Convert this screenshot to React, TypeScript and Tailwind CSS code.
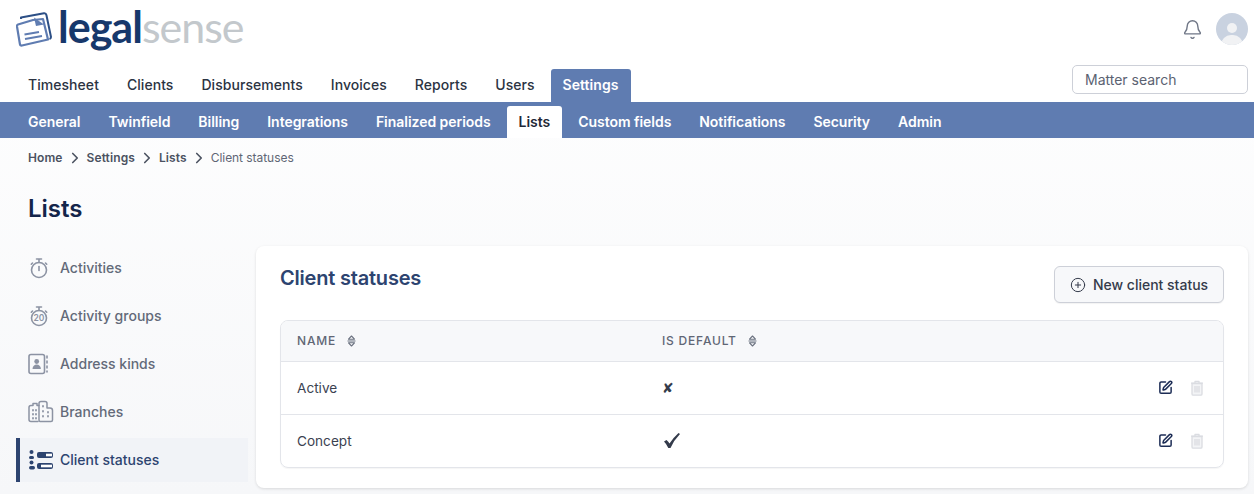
import { Bell, ChevronRight, CirclePlus, SquarePen } from "lucide-react";

const topTabs = ["Timesheet", "Clients", "Disbursements", "Invoices", "Reports", "Users", "Settings"];
const subTabs = ["General", "Twinfield", "Billing", "Integrations", "Finalized periods", "Lists", "Custom fields", "Notifications", "Security", "Admin"];

function Logo() {
  return (
    <div className="flex items-start">
      <svg width="37" height="37" viewBox="0 0 37 37" fill="none" className="mt-[8px]">
        <path d="M5 7 L5 5.5 L28 1.2 Q30 1 30.4 3 L35 25 Q35 26.5 33.5 27" stroke="#2c4f86" strokeWidth="2" strokeLinejoin="round" />
        <path d="M2 12.5 L17 8 L27 7 L32 27.5 L6 33.5 Q4.2 33.8 3.9 32 L1 14.5 Q0.8 13 2 12.5 Z" fill="#fff" stroke="#5f7cb1" strokeWidth="2.2" strokeLinejoin="round" />
        <path d="M18 5.5 L20 14 L28 12.5 Z" fill="#5f7cb1" />
        <path d="M8.5 22.5 L23 20 M9 27 L26 24" stroke="#5f7cb1" strokeWidth="2" />
      </svg>
      <div className="ml-[5px] -mt-[3px] font-['Lato',sans-serif] text-[43px] leading-[52px] font-bold tracking-[-1px]">
        <span className="text-[#17386b]">legal</span>
        <span className="font-normal text-[#c3c8cc]">sense</span>
      </div>
    </div>
  );
}

function Stopwatch({ label }: { label?: string }) {
  return (
    <svg width="24" height="24" viewBox="0 0 24 24" fill="none" stroke="#8c93a3" strokeWidth="1.6" strokeLinecap="round">
      <circle cx="11" cy="14" r="7.5" />
      <path d="M8.5 3h5M11 3v3.5M17.5 7l1.2 1.2M4.5 7 3.3 8.2" />
      {label ? (
        <text x="11" y="17.2" textAnchor="middle" fontSize="8.5" stroke="none" fill="#8c93a3" fontFamily="Inter, sans-serif" fontWeight="600">
          {label}
        </text>
      ) : (
        <path d="M11 10.5v4" />
      )}
    </svg>
  );
}

function AddressIcon() {
  return (
    <svg width="24" height="24" viewBox="0 0 24 24" fill="none" stroke="#8c93a3" strokeWidth="1.6" strokeLinecap="round">
      <rect x="1" y="2.5" width="15.5" height="19" rx="2" />
      <circle cx="8.7" cy="9.5" r="2.4" fill="#8c93a3" stroke="none" />
      <path d="M4.5 17c0-6 8.4-6 8.4 0z" fill="#8c93a3" stroke="none" />
      <path d="M19 4v2M19 9v2M19 14v2M19 19v1" />
    </svg>
  );
}

function BranchIcon() {
  return (
    <svg width="26" height="24" viewBox="0 0 26 24" fill="none" stroke="#8c93a3" strokeWidth="1.5" strokeLinecap="round" strokeLinejoin="round">
      <path d="M11 5.5H9V3.5H5v2H3a2 2 0 0 0-2 2v12a2 2 0 0 0 2 2h7" />
      <path d="M12 21.5a1.5 1.5 0 0 1-1-1.5V3.5A2 2 0 0 1 13 1.5h4a2 2 0 0 1 2 2V8h3a2.5 2.5 0 0 1 2.5 2.5V20a1.5 1.5 0 0 1-1.5 1.5z" />
      <path d="M5 10v.5M5 14v.5M5 18v.5M8 10v.5M8 14v.5M8 18v.5M15 6v.5M15 11v.5M15 16v.5M20 12v.5M20 16v.5" strokeWidth="1.8" />
    </svg>
  );
}

function StatusIcon() {
  return (
    <svg width="26" height="24" viewBox="0 0 26 24" fill="none">
      <circle cx="3.5" cy="4" r="2" fill="#2d4470" />
      <rect x="1" y="8" width="5" height="3" rx="1.5" fill="#2d4470" />
      <circle cx="3.5" cy="14.5" r="2" fill="#2d4470" />
      <rect x="1" y="18" width="6" height="3.5" rx="1.7" fill="#2d4470" />
      <rect x="9" y="4" width="16" height="6" rx="2" fill="#2d4470" />
      <rect x="18" y="5.7" width="6" height="2.6" fill="#fff" />
      <rect x="9" y="15" width="16" height="6" rx="2" fill="#2d4470" />
      <rect x="13" y="16.7" width="11" height="2.6" fill="#fff" />
    </svg>
  );
}

function SortIcon() {
  return (
    <svg width="9" height="12" viewBox="0 0 9 12" fill="none" stroke="#6b7280" strokeWidth="1.1" strokeLinejoin="round">
      <path d="M4.5 1 7.5 4.2h-6zM.5 6h8M4.5 11l-3-3.2h6z" />
    </svg>
  );
}

function TrashIcon() {
  return (
    <svg width="14" height="16" viewBox="0 0 14 16" fill="none" stroke="#dadce1" strokeWidth="1.3" strokeLinejoin="round">
      <path d="M2 3.5h10V14a1.2 1.2 0 0 1-1.2 1.2H3.2A1.2 1.2 0 0 1 2 14z" fill="#f3f4f6" />
      <path d="M1 3.2h12M5 3V1.3h4V3M5 6v6.5M7 6v6.5M9 6v6.5" />
    </svg>
  );
}

function CheckIcon() {
  return (
    <svg width="16" height="15" viewBox="0 0 16 15" className="ml-[2px]">
      <path d="M0 8.5 2.5 7Q4.5 8.5 5.5 10.5 9 5 14.5 0L16 1Q10 7 6.5 15H4.3Q2.5 11 0 8.5Z" fill="#343b4b" />
    </svg>
  );
}

function ActionIcons() {
  return (
    <div className="ml-auto flex items-center gap-[17px] pr-[19px]">
      <SquarePen size={15} strokeWidth={2.4} className="text-[#1c2c55]" />
      <TrashIcon />
    </div>
  );
}

const sideItems = [
  { label: "Activities", icon: <Stopwatch /> },
  { label: "Activity groups", icon: <Stopwatch label="20" /> },
  { label: "Address kinds", icon: <AddressIcon /> },
  { label: "Branches", icon: <BranchIcon /> },
];

export default function App() {
  return (
    <div className="h-[494px] w-[1254px] overflow-hidden bg-gradient-to-b from-white to-[#f6f7f9] font-['Inter',sans-serif]">
      {/* Header */}
      <div className="relative h-[102px] bg-white">
        <div className="pl-[16px] pt-[4px]">
          <Logo />
        </div>
        <div className="absolute right-[6px] top-[13px] flex items-center gap-[13px]">
          <Bell size={21} strokeWidth={1.6} className="text-[#6f7686]" />
          <div className="relative h-[32px] w-[32px] overflow-hidden rounded-full bg-[#c9d2e0]">
            <div className="absolute left-[11px] top-[10px] h-[10px] w-[10px] rounded-full bg-[#f1f2f4]" />
            <div className="absolute left-[5px] top-[22px] h-[20px] w-[22px] rounded-full bg-[#f1f2f4]" />
          </div>
        </div>
        <div className="absolute bottom-0 left-[16px] flex">
          {topTabs.map((t) => (
            <div
              key={t}
              className={`mr-[4px] flex h-[33px] items-center rounded-t-[3px] px-[12px] pb-[2px] text-[14px] tracking-[0.05px] ${t === "Settings" ? "bg-[#5f7cb1] font-semibold text-white" : "font-medium text-[#2b3342]"}`}
            >
              {t}
            </div>
          ))}
        </div>
        <div className="absolute right-[6px] top-[65px] flex h-[29px] w-[176px] items-center rounded-[5px] border border-[#cdd0d8] bg-white pl-[12px] text-[14px] text-[#5b6272]">
          Matter search
        </div>
      </div>

      {/* Sub navigation */}
      <div className="flex h-[36px] bg-[#5f7cb1] pl-[16px] pt-[4px]">
        {subTabs.map((t) => (
          <div
            key={t}
            className={`mr-[4px] flex items-center rounded-t-[3px] px-[12px] pb-[1px] text-[14px] font-semibold tracking-[-0.04px] ${t === "Lists" ? "bg-white text-[#1f2937]" : "text-white"}`}
          >
            {t}
          </div>
        ))}
      </div>

      {/* Breadcrumb */}
      <div className="flex h-[39px] items-center gap-[3px] pl-[28px] text-[12px] text-[#4b5261]">
        <span className="font-semibold tracking-[0.1px]">Home</span>
        <ChevronRight size={18} strokeWidth={2.2} />
        <span className="font-semibold tracking-[0.1px]">Settings</span>
        <ChevronRight size={18} strokeWidth={2.2} />
        <span className="font-semibold tracking-[0.1px]">Lists</span>
        <ChevronRight size={18} strokeWidth={2.2} />
        <span className="tracking-[-0.05px] text-[#5f6675]">Client statuses</span>
      </div>

      <h1 className="pl-[28px] pt-[17px] text-[24px] leading-[30px] font-semibold text-[#14254a]">Lists</h1>

      <div className="mt-[22px] flex">
        {/* Sidebar */}
        <div className="ml-[16px] flex w-[232px] flex-col gap-[4px]">
          {sideItems.map((s) => (
            <div key={s.label} className="flex h-[44px] items-center pb-[1px]">
              <div className="ml-[12px] flex w-[32px] items-center">{s.icon}</div>
              <span className="text-[14px] font-medium text-[#636a79]">{s.label}</span>
            </div>
          ))}
          <div className="flex h-[44px] items-center border-l-4 border-[#2d4470] bg-[#f1f3f7] pb-[1px]">
            <div className="ml-[8px] flex w-[32px] items-center">
              <StatusIcon />
            </div>
            <span className="text-[14px] font-medium text-[#2d4470]">Client statuses</span>
          </div>
        </div>

        {/* Card */}
        <div className="ml-[8px] h-[242px] w-[992px] rounded-[8px] bg-white px-[24px] pt-[20px] shadow-[0_1px_3px_rgba(0,0,0,0.12)]">
          <div className="flex items-start justify-between">
            <h2 className="text-[20px] leading-[24px] font-semibold tracking-[-0.2px] text-[#2d4470]">Client statuses</h2>
            <button className="flex h-[37px] w-[170px] items-center justify-center gap-[7px] rounded-[6px] border border-[#cdd0d8] bg-[#f7f8fa] text-[14px] font-medium text-[#343b4b] shadow-[0_1px_1px_rgba(0,0,0,0.05)]">
              <CirclePlus size={16} strokeWidth={1.5} />
              New client status
            </button>
          </div>
          <div className="mt-[17px] overflow-hidden rounded-[8px] border border-[#e3e5ea] shadow-[0_1px_1px_rgba(0,0,0,0.04)]">
            <div className="flex h-[41px] items-center border-b border-[#e3e5ea] bg-[#f7f8fa] text-[12px] font-medium tracking-[0.8px] text-[#5f6675]">
              <div className="flex w-[381px] items-center gap-[11px] pl-[16px]">
                NAME <SortIcon />
              </div>
              <div className="flex items-center gap-[11px]">
                IS DEFAULT <SortIcon />
              </div>
            </div>
            <div className="flex h-[53px] items-center border-b border-[#e3e5ea] pb-[1px] text-[13.6px] text-[#3b4251]">
              <div className="w-[381px] pl-[16px] pt-[1px]">Active</div>
              <span className="font-['DejaVu_Sans',sans-serif] text-[14px] leading-none text-[#343b4b]">✘</span>
              <ActionIcons />
            </div>
            <div className="flex h-[52px] items-center pb-[1px] text-[13.6px] text-[#3b4251]">
              <div className="w-[381px] pl-[16px] pt-[1px]">Concept</div>
              <CheckIcon />
              <ActionIcons />
            </div>
          </div>
        </div>
      </div>
    </div>
  );
}
